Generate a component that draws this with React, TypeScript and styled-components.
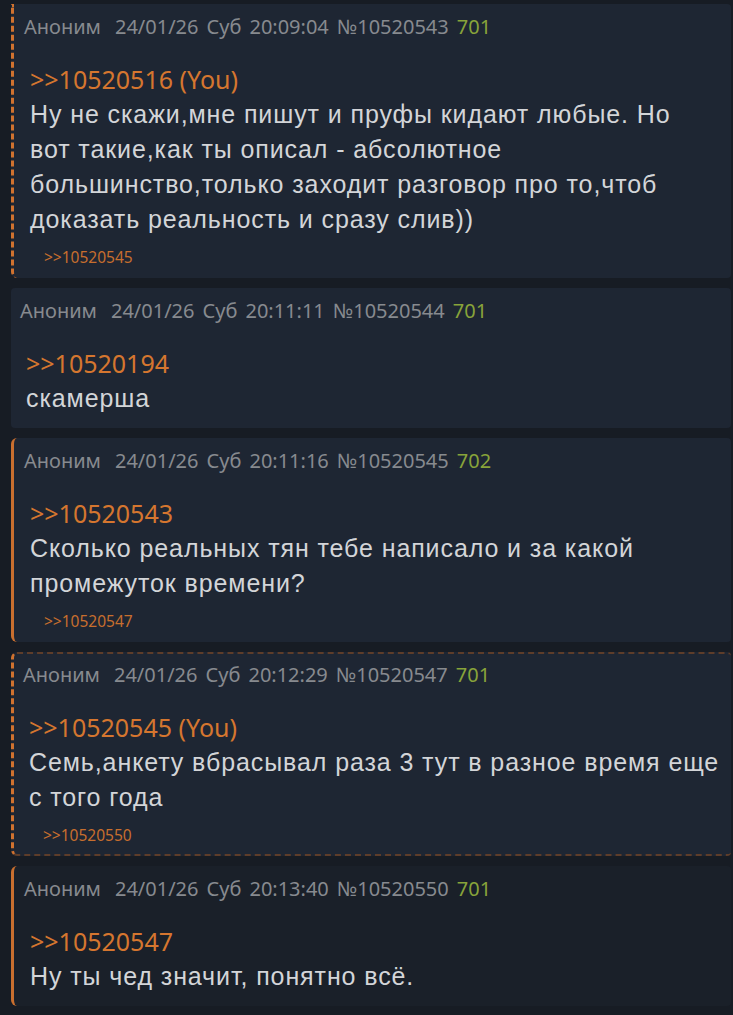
import React from 'react'
import styled, { createGlobalStyle, css } from 'styled-components'

const GlobalStyle = createGlobalStyle`
    html, body {
        margin: 0;
        padding: 0;
        background: #171c24;
    }
    body {
        font-family: "Liberation Sans", Arial, sans-serif;
    }
`

type Variant = 'dashed' | 'plain' | 'solid' | 'dashedBox' | 'last'

const Thread = styled.div`
    display: flex;
    flex-direction: column;
    gap: 10px;
    padding: 4px 2px 0 11px;
    height: 1015px;
    overflow: hidden;
    box-sizing: border-box;
`

const Post = styled.div<{ $variant: Variant }>`
    background: #1e2633;
    border-radius: 4px;
    padding: 11px 10px 12px 9px;
    flex-shrink: 0;

    ${p => p.$variant === 'dashed' && css`
        border-left: 3px dashed #d0722f;
        border-radius: 0 4px 4px 6px;
        padding-left: 10px;
    `}
    ${p => p.$variant === 'solid' && css`
        border-left: 3px solid #c96f2f;
        border-radius: 6px 4px 4px 6px;
        padding-left: 10px;
    `}
    ${p => p.$variant === 'dashedBox' && css`
        border-left: 3px dashed #d0722f;
        border-top: 2px dashed #5e3d2a;
        border-bottom: 2px dashed #5e3d2a;
        border-radius: 6px 4px 4px 6px;
        padding: 9px 10px 10px 9px;
    `}
    ${p => p.$variant === 'last' && css`
        background: #1a2029;
        border-left: 3px solid #c96f2f;
        border-radius: 6px 4px 4px 6px;
        padding-left: 10px;
    `}
`

const Meta = styled.div`
    font-family: "Noto Sans", "Open Sans", sans-serif;
    font-size: 20px;
    line-height: 24px;
    color: #878a8f;
    white-space: nowrap;
    display: flex;
    gap: 8px;
`

const Name = styled.span`
    margin-right: 6px;
`

const Count = styled.span`
    color: #88a33a;
`

const Body = styled.div`
    margin-top: 23px;
    padding-left: 6px;
    font-size: 25px;
    letter-spacing: 0.9px;
    line-height: 35px;
    color: #d3d5d8;
    max-width: 695px;
    white-space: pre-line;
`

const Ref = styled.div`
    font-family: "Noto Sans", "Open Sans", sans-serif;
    color: #d5762f;
    font-size: 25px;
    letter-spacing: 0;
`

const Replies = styled.div`
    margin-top: 11px;
    padding-left: 20px;
    font-family: "Noto Sans", "Open Sans", sans-serif;
    font-size: 15.5px;
    line-height: 18px;
    color: #c76e2e;
`

type PostData = {
    variant: Variant
    time: string
    num: string
    count: string
    ref: string
    text: string
    reply?: string
}

const posts: PostData[] = [
    {
        variant: 'dashed', time: '20:09:04', num: '10520543', count: '701',
        ref: '>>10520516 (You)',
        text: 'Ну не скажи,мне пишут и пруфы кидают любые. Но\nвот такие,как ты описал - абсолютное большинство,только заходит разговор про то,чтоб доказать реальность и сразу слив))',
        reply: '>>10520545',
    },
    {
        variant: 'plain', time: '20:11:11', num: '10520544', count: '701',
        ref: '>>10520194',
        text: 'скамерша',
    },
    {
        variant: 'solid', time: '20:11:16', num: '10520545', count: '702',
        ref: '>>10520543',
        text: 'Сколько реальных тян тебе написало и за какой промежуток времени?',
        reply: '>>10520547',
    },
    {
        variant: 'dashedBox', time: '20:12:29', num: '10520547', count: '701',
        ref: '>>10520545 (You)',
        text: 'Семь,анкету вбрасывал раза 3 тут в разное время еще с того года',
        reply: '>>10520550',
    },
    {
        variant: 'last', time: '20:13:40', num: '10520550', count: '701',
        ref: '>>10520547',
        text: 'Ну ты чед значит, понятно всё.',
    },
]

export default function App() {
    return (
        <>
            <GlobalStyle />
            <Thread>
                {posts.map(p => (
                    <Post key={p.num} $variant={p.variant}>
                        <Meta>
                            <Name>Аноним</Name>
                            <span>24/01/26</span>
                            <span>Суб</span>
                            <span>{p.time}</span>
                            <span>№{p.num}</span>
                            <Count>{p.count}</Count>
                        </Meta>
                        <Body>
                            <Ref>{p.ref}</Ref>
                            {p.text}
                        </Body>
                        {p.reply && <Replies>{p.reply}</Replies>}
                    </Post>
                ))}
            </Thread>
        </>
    )
}
